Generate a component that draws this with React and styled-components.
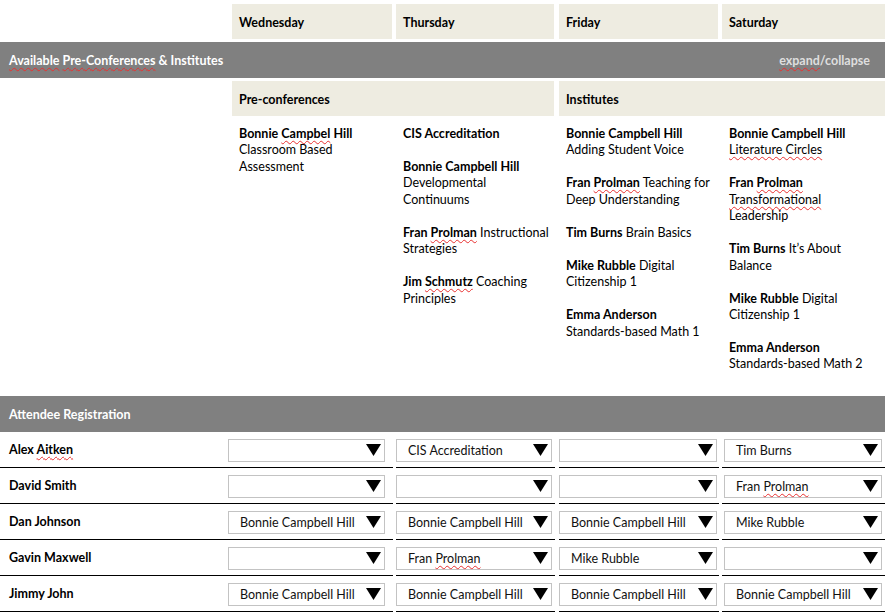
import React from 'react';
import styled, { createGlobalStyle } from 'styled-components';

const COLS = '228px 165px 162px 164px 166px';

const GlobalStyle = createGlobalStyle`
  body {
    margin: 0;
    background: #fff;
    font-family: Lato, "Liberation Sans", sans-serif;
    font-size: 12.5px;
    color: #000;
  }
`;

const Page = styled.div`
  width: 885px;
  padding-top: 4px;
`;

const DayRow = styled.div`
  display: grid;
  grid-template-columns: ${COLS};
  height: 35px;
`;

const HeadCell = styled.div`
  grid-column: ${(p) => p.$span || 'auto'};
  margin: 0 ${(p) => p.$mr}px 0 ${(p) => p.$ml}px;
  background: #eeece1;
  display: flex;
  align-items: center;
  padding: 2px 0 0 7px;
  font-weight: 700;
`;

const Bar = styled.div`
  display: flex;
  justify-content: space-between;
  align-items: center;
  height: 36px;
  margin-top: 3px;
  padding: 1px 15px 0 9px;
  box-sizing: border-box;
  background: #808080;
  color: #fff;
  font-weight: 700;
`;

const BarLink = styled.span`
  color: #dedede;
  cursor: pointer;
`;

const SubRow = styled(DayRow)`
  margin-top: 3px;
`;

const Programs = styled.div`
  display: grid;
  grid-template-columns: ${COLS};
  height: 267px;
  padding-top: 10px;
`;

const ProgramCol = styled.div`
  grid-column: ${(p) => p.$col};
  margin: 0 ${(p) => p.$mr}px 0 ${(p) => p.$ml}px;
  padding-left: 7px;
`;

const Block = styled.div`
  margin-bottom: 16.6px;
  line-height: 16.4px;
`;

const Line = styled.div`
  white-space: nowrap;
`;

const B = styled.b`
  font-weight: 700;
`;

const Sq = styled.span`
  text-decoration: underline wavy #e83030;
  text-decoration-thickness: 1px;
  text-underline-offset: 2px;
  text-decoration-skip-ink: none;
`;

const RegRow = styled.div`
  display: grid;
  grid-template-columns: ${COLS};
  height: 36px;
`;

const NameCell = styled.div`
  display: flex;
  align-items: center;
  padding-left: 9px;
  border-bottom: 1px solid #000;
  font-weight: 700;
`;

const SlotCell = styled.div`
  display: flex;
  align-items: center;
  margin-left: ${(p) => p.$ml}px;
  padding: 1px ${(p) => p.$pr}px 0 ${(p) => p.$pl}px;
  border-bottom: 1px solid #000;
`;

const Select = styled.div`
  flex: 1;
  height: 23px;
  box-sizing: border-box;
  display: flex;
  align-items: center;
  justify-content: space-between;
  padding: 0 3px 0 11px;
  border: 1px solid #c3c3c3;
  background: #fff;
  color: #111;
`;

const Arrow = () => (
  <svg width="15" height="12" viewBox="0 0 15 12">
    <polygon points="0,0 15,0 7.5,12" fill="#000" />
  </svg>
);

const DAYS = [
  { name: 'Wednesday', ml: 4, mr: 1 },
  { name: 'Thursday', ml: 3, mr: 1 },
  { name: 'Friday', ml: 4, mr: 1 },
  { name: 'Saturday', ml: 3, mr: 0 },
];

const SLOTS = [
  { ml: 0, pl: 0, pr: 8 },
  { ml: 3, pl: 0, pr: 3 },
  { ml: 4, pl: 0, pr: 2 },
  { ml: 3, pl: 2, pr: 3 },
];

const PROGRAMS = [
  [
    [<><B>Bonnie <Sq>Campbel</Sq> Hill</B></>, 'Classroom Based', 'Assessment'],
  ],
  [
    [<B>CIS Accreditation</B>],
    [<B>Bonnie Campbell Hill</B>, 'Developmental', 'Continuums'],
    [<><B>Fran <Sq>Prolman</Sq></B> Instructional</>, 'Strategies'],
    [<><B>Jim <Sq>Schmutz</Sq></B> Coaching</>, 'Principles'],
  ],
  [
    [<B>Bonnie Campbell Hill</B>, 'Adding Student Voice'],
    [<><B>Fran <Sq>Prolman</Sq></B> Teaching for</>, 'Deep Understanding'],
    [<><B>Tim Burns</B> Brain Basics</>],
    [<><B>Mike Rubble</B> Digital</>, 'Citizenship 1'],
    [<B>Emma Anderson</B>, 'Standards-based Math 1'],
  ],
  [
    [<B>Bonnie Campbell Hill</B>, <Sq>Literature Circles</Sq>],
    [<B>Fran <Sq>Prolman</Sq></B>, <Sq>Transformational</Sq>, 'Leadership'],
    [<><B>Tim Burns</B> It’s About</>, 'Balance'],
    [<><B>Mike Rubble</B> Digital</>, 'Citizenship 1'],
    [<B>Emma Anderson</B>, 'Standards-based Math 2'],
  ],
];

const ATTENDEES = [
  { name: <>Alex <Sq>Aitken</Sq></>, picks: ['', 'CIS Accreditation', '', 'Tim Burns'] },
  { name: 'David Smith', picks: ['', '', '', <>Fran <Sq>Prolman</Sq></>] },
  {
    name: 'Dan Johnson',
    picks: ['Bonnie Campbell Hill', 'Bonnie Campbell Hill', 'Bonnie Campbell Hill', 'Mike Rubble'],
  },
  { name: 'Gavin Maxwell', picks: ['', <>Fran <Sq>Prolman</Sq></>, 'Mike Rubble', ''] },
  {
    name: 'Jimmy John',
    picks: ['Bonnie Campbell Hill', 'Bonnie Campbell Hill', 'Bonnie Campbell Hill', 'Bonnie Campbell Hill'],
  },
];

export default function App() {
  return (
    <Page>
      <GlobalStyle />
      <DayRow>
        <div />
        {DAYS.map((d) => (
          <HeadCell key={d.name} $ml={d.ml} $mr={d.mr}>
            {d.name}
          </HeadCell>
        ))}
      </DayRow>

      <Bar>
        <span>
          <Sq>Available</Sq> <Sq>Pre-Conferences</Sq> &amp; Institutes
        </span>
        <BarLink>
          <Sq>expand</Sq>/collapse
        </BarLink>
      </Bar>

      <SubRow>
        <HeadCell $span="2 / 4" $ml={4} $mr={1}>Pre-conferences</HeadCell>
        <HeadCell $span="4 / 6" $ml={4} $mr={0}>Institutes</HeadCell>
      </SubRow>

      <Programs>
        {PROGRAMS.map((col, i) => (
          <ProgramCol key={i} $col={i + 2} $ml={DAYS[i].ml} $mr={DAYS[i].mr}>
            {col.map((lines, j) => (
              <Block key={j}>
                {lines.map((l, k) => (
                  <Line key={k}>{l}</Line>
                ))}
              </Block>
            ))}
          </ProgramCol>
        ))}
      </Programs>

      <Bar>
        <span>Attendee Registration</span>
      </Bar>

      {ATTENDEES.map((a, i) => (
        <RegRow key={i}>
          <NameCell>
            <span>{a.name}</span>
          </NameCell>
          {a.picks.map((p, j) => (
            <SlotCell key={j} $ml={SLOTS[j].ml} $pl={SLOTS[j].pl} $pr={SLOTS[j].pr}>
              <Select>
                <span>{p}</span>
                <Arrow />
              </Select>
            </SlotCell>
          ))}
        </RegRow>
      ))}
    </Page>
  );
}
